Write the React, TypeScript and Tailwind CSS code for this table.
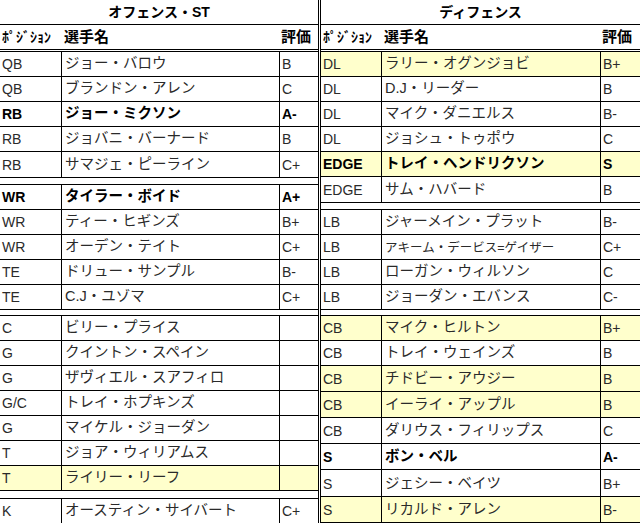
type Row = {
  pos: string;
  name: string;
  grade?: string;
  bold?: boolean;
  hl?: boolean;
  small?: boolean;
  h?: number;
};

const offense: Row[][] = [
  [
    { pos: "QB", name: "ジョー・バロウ", grade: "B" },
    { pos: "QB", name: "ブランドン・アレン", grade: "C" },
    { pos: "RB", name: "ジョー・ミクソン", grade: "A-", bold: true },
    { pos: "RB", name: "ジョバニ・バーナード", grade: "B" },
    { pos: "RB", name: "サマジェ・ピーライン", grade: "C+", h: 26 },
  ],
  [
    { pos: "WR", name: "タイラー・ボイド", grade: "A+", bold: true },
    { pos: "WR", name: "ティー・ヒギンズ", grade: "B+" },
    { pos: "WR", name: "オーデン・テイト", grade: "C+" },
    { pos: "TE", name: "ドリュー・サンプル", grade: "B-" },
    { pos: "TE", name: "C.J・ユゾマ", grade: "C+" },
  ],
  [
    { pos: "C", name: "ビリー・プライス" },
    { pos: "G", name: "クイントン・スペイン" },
    { pos: "G", name: "ザヴィエル・スアフィロ" },
    { pos: "G/C", name: "トレイ・ホプキンズ" },
    { pos: "G", name: "マイケル・ジョーダン" },
    { pos: "T", name: "ジョア・ウィリアムス" },
    { pos: "T", name: "ライリー・リーフ", hl: true },
  ],
  [{ pos: "K", name: "オースティン・サイバート", grade: "C+" }],
];

const defense: Row[][] = [
  [
    { pos: "DL", name: "ラリー・オグンジョビ", grade: "B+", hl: true },
    { pos: "DL", name: "D.J・リーダー", grade: "B" },
    { pos: "DL", name: "マイク・ダニエルス", grade: "B-" },
    { pos: "DL", name: "ジョシュ・トゥポウ", grade: "C" },
    { pos: "EDGE", name: "トレイ・ヘンドリクソン", grade: "S", bold: true, hl: true },
    { pos: "EDGE", name: "サム・ハバード", grade: "B", h: 26 },
  ],
  [
    { pos: "LB", name: "ジャーメイン・プラット", grade: "B-" },
    { pos: "LB", name: "アキーム・デービス=ゲイザー", grade: "C+", small: true },
    { pos: "LB", name: "ローガン・ウィルソン", grade: "C" },
    { pos: "LB", name: "ジョーダン・エバンス", grade: "C-" },
  ],
  [
    { pos: "CB", name: "マイク・ヒルトン", grade: "B+", hl: true },
    { pos: "CB", name: "トレイ・ウェインズ", grade: "B" },
    { pos: "CB", name: "チドビー・アウジー", grade: "B", hl: true, h: 26 },
    { pos: "CB", name: "イーライ・アップル", grade: "B", hl: true, h: 26 },
    { pos: "CB", name: "ダリウス・フィリップス", grade: "C", h: 26 },
    { pos: "S", name: "ボン・ベル", grade: "A-", bold: true, h: 26 },
    { pos: "S", name: "ジェシー・ベイツ", grade: "B+", h: 27 },
    { pos: "S", name: "リカルド・アレン", grade: "B-", hl: true, h: 26 },
  ],
];

const font = {
  fontFamily: '"Liberation Sans", "Noto Sans CJK JP", sans-serif',
};

function DataRow({ r, posW, nameW }: { r: Row; posW: string; nameW: string }) {
  const bg = r.hl ? "bg-[#ffffcc]" : "bg-white";
  const weight = r.bold ? "font-bold text-black" : "text-[#2a2a2a]";
  return (
    <div
      className={`flex border-b border-black ${bg} ${weight}`}
      style={{ height: r.h ?? 25 }}
    >
      <div className={`${posW} flex items-end pb-[1px] pl-[2px] text-[14px] border-r border-black shrink-0`}>
        {r.pos}
      </div>
      <div
        className={`${nameW} flex items-end pb-[1px] pl-[3px] border-r border-black shrink-0 whitespace-nowrap ${
          r.small ? "text-[12.5px]" : "text-[14.5px]"
        }`}
      >
        {r.name}
      </div>
      <div className="flex-1 flex items-end pb-[1px] pl-[2px] text-[14px]">{r.grade}</div>
    </div>
  );
}

function Table({
  title,
  groups,
  posW,
  nameW,
  gaps,
}: {
  title: string;
  groups: Row[][];
  posW: string;
  nameW: string;
  gaps: string[];
}) {
  return (
    <div className="flex flex-col">
      <div className="h-[25px] border-b border-black flex items-center justify-center font-bold text-[14px] text-black">
        {title}
      </div>
      <div className="h-[27px] border-b-[3px] border-double border-black flex font-bold text-black">
        <div className={`${posW} shrink-0 flex items-center pl-[2px] text-[14px]`}>
          ﾎﾟｼﾞｼｮﾝ
        </div>
        <div className={`${nameW} shrink-0 flex items-center pl-[2px] text-[15px]`}>選手名</div>
        <div className="flex-1 flex items-center pl-[1px] text-[15px]">評価</div>
      </div>
      {groups.map((g, gi) => (
        <div key={gi}>
          {gi > 0 && <div className={gaps[gi - 1]} />}
          <div className={gi > 0 ? "border-t border-black" : ""}>
            {g.map((r, ri) => (
              <DataRow key={ri} r={r} posW={posW} nameW={nameW} />
            ))}
          </div>
        </div>
      ))}
    </div>
  );
}

export default function App() {
  return (
    <div className="w-[640px] h-[523px] overflow-hidden bg-white flex" style={font}>
      <div className="w-[319px] shrink-0 border-r border-black">
        <Table
          title="オフェンス・ST"
          groups={offense}
          posW="w-[62px]"
          nameW="w-[218px]"
          gaps={["h-[6px]", "h-[5px]", "h-[7px]"]}
        />
      </div>
      <div className="flex-1 ml-[1px] border-l border-black">
        <Table
          title="ディフェンス"
          groups={defense}
          posW="w-[61px]"
          nameW="w-[219px]"
          gaps={["h-[6px]", "h-[5px]"]}
        />
      </div>
    </div>
  );
}
